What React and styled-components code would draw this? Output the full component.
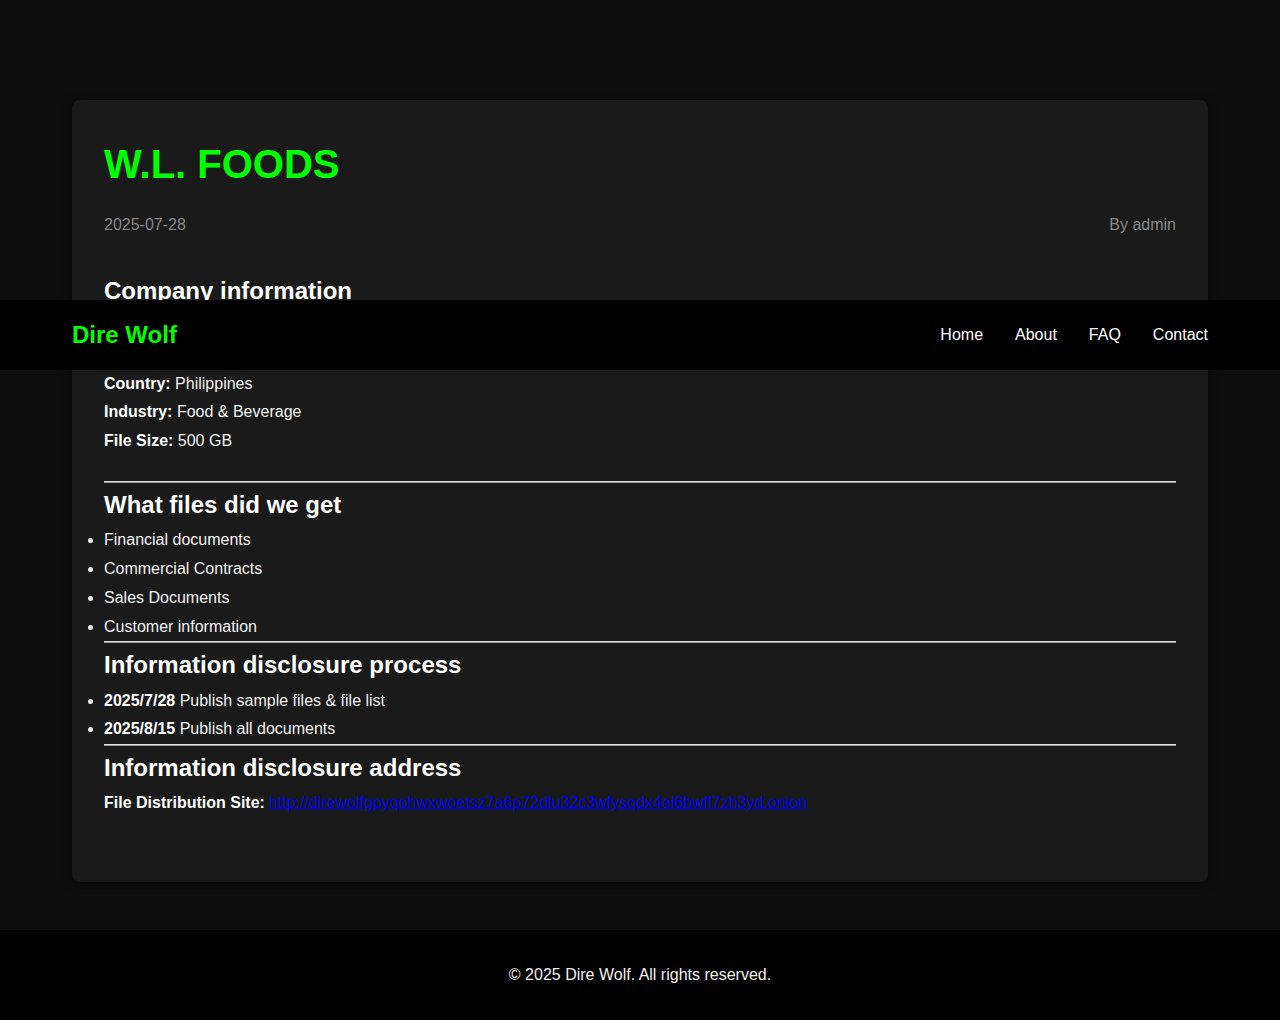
import React from "react";
import styled, { createGlobalStyle } from "styled-components";

const GlobalStyle = createGlobalStyle`
  * { box-sizing: border-box; }
  body {
    margin: 0;
    background: #0d0d0d;
    color: #f2f2f2;
    font-family: "Liberation Sans", Arial, sans-serif;
    font-size: 16px;
    line-height: 1.8;
  }
`;

const navLinks = ["Home", "About", "FAQ", "Contact"];

const companyInfo = [
  ["Company:", "W.L. Foods"],
  ["Website:", "wlfoods.com.ph"],
  ["Country:", "Philippines"],
  ["Industry:", "Food & Beverage"],
  ["File Size:", "500 GB"],
];

const files = [
  "Financial documents",
  "Commercial Contracts",
  "Sales Documents",
  "Customer information",
];

const timeline = [
  ["2025/7/28", "Publish sample files & file list"],
  ["2025/8/15", "Publish all documents"],
];

const onion =
  "http://direwolfgpyqohwxwoetsz7a6p72dlu32c3wfysqdx4ei6bwfl7zh3yd.onion";

const App = () => {
  return (
    <Page>
      <GlobalStyle />
      <Header>
        <HeaderInner>
          <Brand href="#">Dire Wolf</Brand>
          <Nav>
            {navLinks.map((l) => (
              <NavItem key={l} href="#">
                {l}
              </NavItem>
            ))}
          </Nav>
        </HeaderInner>
      </Header>

      <Main>
        <Card>
          <Title>W.L. FOODS</Title>
          <Meta>
            <span>2025-07-28</span>
            <span>By admin</span>
          </Meta>

          <SectionTitle>Company information</SectionTitle>
          <InfoList>
            {companyInfo.map(([k, v]) => (
              <div key={k}>
                <strong>{k}</strong> {v}
              </div>
            ))}
          </InfoList>

          <Rule $top={25} />
          <SectionTitle>What files did we get</SectionTitle>
          <Bullets>
            {files.map((f) => (
              <li key={f}>{f}</li>
            ))}
          </Bullets>

          <Rule />
          <SectionTitle>Information disclosure process</SectionTitle>
          <Bullets>
            {timeline.map(([d, t]) => (
              <li key={d}>
                <strong>{d}</strong> {t}
              </li>
            ))}
          </Bullets>

          <Rule />
          <SectionTitle>Information disclosure address</SectionTitle>
          <Paragraph>
            <strong>File Distribution Site:</strong>{" "}
            <OnionLink href="#">{onion}</OnionLink>
          </Paragraph>
        </Card>
      </Main>

      <Footer>© 2025 Dire Wolf. All rights reserved.</Footer>
    </Page>
  );
};

const Page = styled.div`
  position: relative;
  min-height: 1020px;
  display: flex;
  flex-direction: column;
`;

const Header = styled.header`
  position: absolute;
  top: 300px;
  left: 0;
  right: 0;
  height: 70px;
  background: #000;
  z-index: 10;
`;

const HeaderInner = styled.div`
  max-width: 1136px;
  height: 100%;
  margin: 0 auto;
  display: flex;
  align-items: center;
  justify-content: space-between;
`;

const Brand = styled.a`
  color: #00ff00;
  font-size: 24px;
  font-weight: 700;
  text-decoration: none;
`;

const Nav = styled.nav`
  display: flex;
  gap: 32px;
`;

const NavItem = styled.a`
  color: #fff;
  text-decoration: none;
  font-size: 16px;
`;

const Main = styled.main`
  flex: 1;
  padding-top: 100px;
`;

const Card = styled.article`
  max-width: 1136px;
  margin: 0 auto;
  background: #1a1a1a;
  border-radius: 8px;
  box-shadow: 0 2px 10px rgba(0, 0, 0, 0.5);
  padding: 40px 32px 64px;
`;

const Title = styled.h1`
  margin: 0 0 23px;
  color: #00ff00;
  font-size: 40px;
  line-height: 1.2;
  font-weight: 700;
`;

const Meta = styled.div`
  display: flex;
  justify-content: space-between;
  color: #888;
  margin-bottom: 29px;
`;

const SectionTitle = styled.h2`
  margin: 0;
  font-size: 24px;
  font-weight: 700;
  color: #fff;
`;

const InfoList = styled.div`
  strong {
    color: #fff;
  }
`;

const Bullets = styled.ul`
  margin: 0;
  padding-left: 0;
  list-style-position: outside;
  strong {
    color: #fff;
  }
`;

const Rule = styled.hr`
  margin: ${(p) => p.$top ?? 0}px 0 0;
  height: 0;
  border: none;
  border-top: 1px solid #e6e6e6;
  border-bottom: 1px solid #9a9a9a;
`;

const Paragraph = styled.p`
  margin: 0;
  strong {
    color: #fff;
  }
`;

const OnionLink = styled.a`
  color: #0000ee;
  text-decoration: underline;
`;

const Footer = styled.footer`
  margin-top: 48px;
  background: #000;
  color: #f2f2f2;
  text-align: center;
  padding: 31px 0;
`;

export default App;
